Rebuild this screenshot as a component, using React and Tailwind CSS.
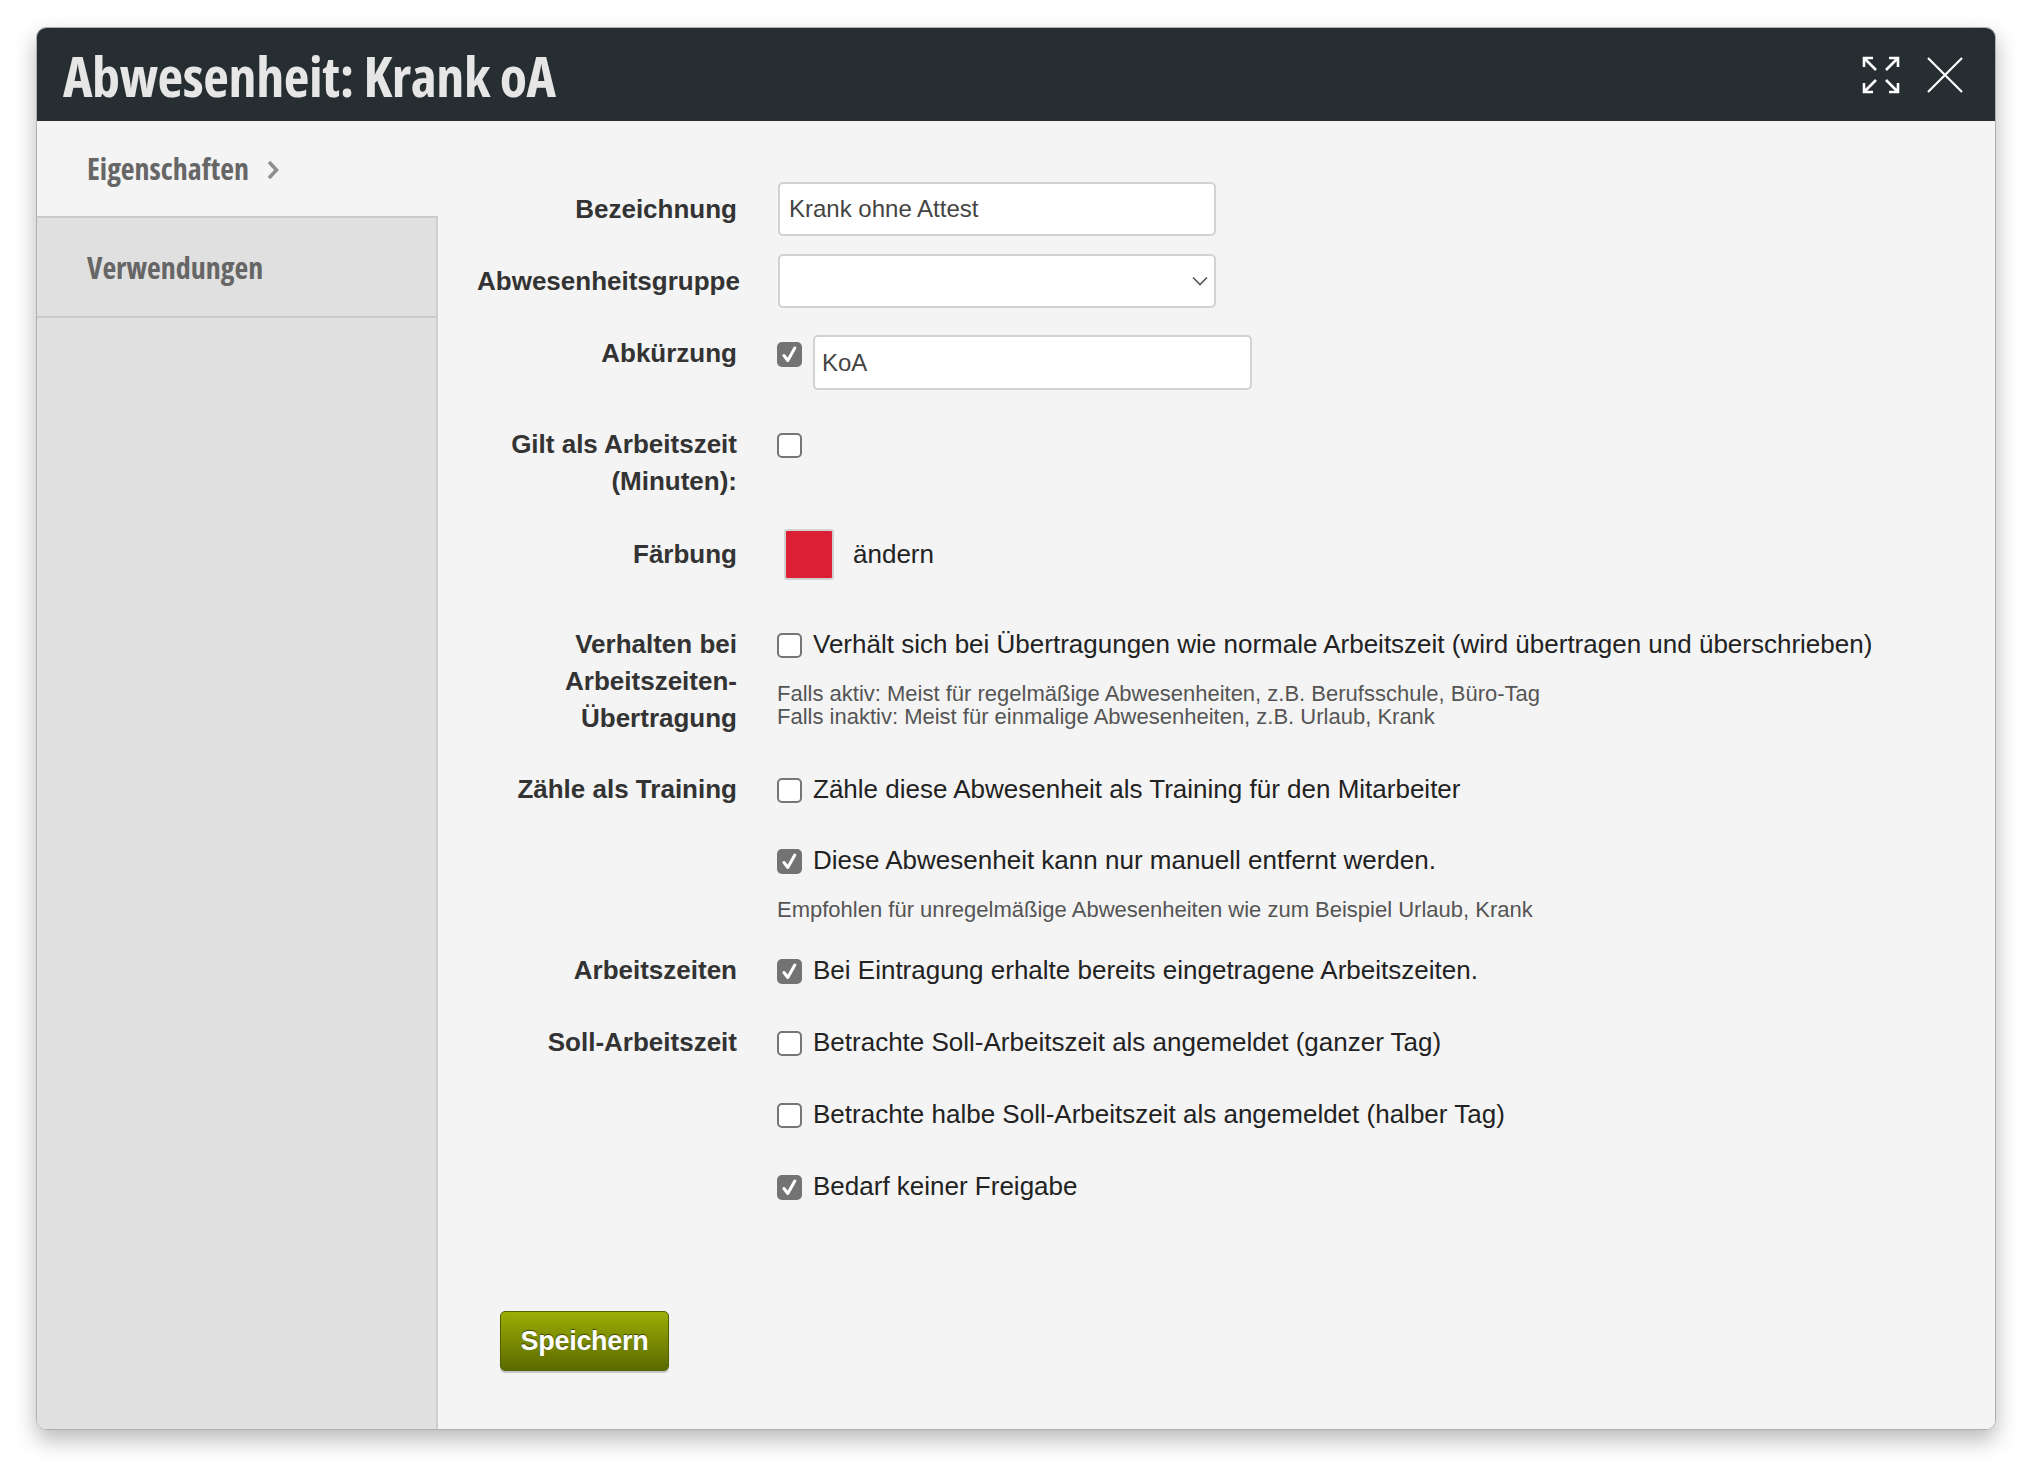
import React from "react";

const Checkbox = ({ checked }) =>
  checked ? (
    <span className="mt-[7px] flex h-[25px] w-[25px] shrink-0 items-center justify-center rounded-[5px] bg-[#737373]">
      <svg width="15" height="17" viewBox="0 0 15 17" fill="none">
        <path d="M2 9.5 L5.8 14.5 L12.8 2" stroke="white" strokeWidth="3" strokeLinecap="round" strokeLinejoin="round" />
      </svg>
    </span>
  ) : (
    <span className="mt-[7px] block h-[25px] w-[25px] shrink-0 rounded-[5px] border-2 border-[#767676] bg-white"></span>
  );

const Label = ({ children }) => (
  <div className="w-[260px] shrink-0 text-right text-[26px] leading-[37px] font-bold text-[#333]">{children}</div>
);

const CheckLine = ({ checked, children }) => (
  <div className="flex items-start">
    <Checkbox checked={checked} />
    <span className="ml-[11px] text-[26px] leading-[37px] text-[#222]">{children}</span>
  </div>
);

const Help = ({ children, className }) => (
  <div className={`text-[22px] leading-[23px] text-[#555] ${className}`}>{children}</div>
);

const App = () => {
  return (
    <div className="min-h-screen bg-white pt-[27px] pl-[36px] font-['Liberation_Sans',Arial,sans-serif]">
      <div className="flex h-[1403px] w-[1960px] flex-col overflow-hidden rounded-[10px] border border-[#b0b0b0] shadow-[0_10px_22px_rgba(0,0,0,0.28)]">
        {/* Header */}
        <div className="flex h-[93px] shrink-0 items-center justify-between bg-[#272e31] pl-[26px] pr-[32px]">
          <h1 className="font-['Open_Sans',sans-serif] text-[56px] leading-none font-bold tracking-[-0.4px] text-[#e6e6e6] font-stretch-[75%]">
            Abwesenheit: Krank oA
          </h1>
          <div className="flex items-center gap-[27px]">
            <svg width="38" height="38" viewBox="0 0 38 38" fill="none" stroke="white" strokeWidth="2.6">
              <path d="M2 2 L14 14 M2 11 V2 H11" />
              <path d="M36 2 L24 14 M27 2 H36 V11" />
              <path d="M2 36 L14 24 M2 27 V36 H11" />
              <path d="M36 36 L24 24 M27 36 H36 V27" />
            </svg>
            <svg width="36" height="36" viewBox="0 0 36 36" fill="none" stroke="white" strokeWidth="2.2">
              <path d="M1 1 L35 35 M35 1 L1 35" />
            </svg>
          </div>
        </div>

        <div className="flex flex-1">
          {/* Sidebar */}
          <div className="flex w-[401px] shrink-0 flex-col">
            <div className="flex h-[97px] items-center border-b-2 border-[#cacaca] bg-[#f4f4f4] pl-[50px]">
              <span className="font-['Open_Sans',sans-serif] text-[30px] font-bold text-[#666] font-stretch-[75%]">Eigenschaften</span>
              <svg className="ml-[18px] mt-[2px]" width="12" height="20" viewBox="0 0 12 20" fill="none" stroke="#8f8f8f" strokeWidth="3.6">
                <path d="M2 2 L9.5 10 L2 18" />
              </svg>
            </div>
            <div className="flex flex-1 flex-col border-r-2 border-[#cfcfcf] bg-[#e0e0e0]">
              <div className="flex h-[100px] items-center border-b-2 border-[#cacaca] pl-[50px]">
                <span className="font-['Open_Sans',sans-serif] text-[30px] font-bold text-[#666] font-stretch-[75%]">Verwendungen</span>
              </div>
            </div>
          </div>

          {/* Content */}
          <div className="flex-1 bg-[#f4f4f4] pl-[39px]">
            <div className="mt-[61px] flex h-[54px] items-center">
              <Label>Bezeichnung</Label>
              <div className="ml-[41px] flex h-[54px] w-[438px] items-center rounded-[5px] border-2 border-[#d2d2d2] bg-white pl-[9px] text-[24px] text-[#444]">
                Krank ohne Attest
              </div>
            </div>

            <div className="mt-[18px] flex h-[54px] items-center">
              <Label>Abwesenheitsgruppe</Label>
              <div className="ml-[41px] flex h-[54px] w-[438px] items-center justify-end rounded-[5px] border-2 border-[#d2d2d2] bg-white pr-[6px]">
                <svg width="16" height="10" viewBox="0 0 16 10" fill="none" stroke="#555" strokeWidth="1.6">
                  <path d="M1 1.5 L8 8.5 L15 1.5" />
                </svg>
              </div>
            </div>

            <div className="mt-[27px] flex items-start">
              <Label>Abkürzung</Label>
              <div className="ml-[40px] flex items-start">
                <Checkbox checked />
                <div className="ml-[11px] flex h-[55px] w-[439px] items-center rounded-[5px] border-2 border-[#d2d2d2] bg-white pl-[7px] text-[24px] text-[#444]">
                  KoA
                </div>
              </div>
            </div>

            <div className="mt-[36px] flex items-start">
              <Label>
                Gilt als Arbeitszeit
                <br />
                (Minuten):
              </Label>
              <div className="ml-[40px]">
                <Checkbox />
              </div>
            </div>

            <div className="mt-[29px] flex items-center">
              <Label>Färbung</Label>
              <div className="ml-[40px] flex items-center">
                <span className="ml-[7px] block h-[51px] w-[50px] rounded-[3px] border-2 border-[#d0d0d0] bg-[#dc1f35]"></span>
                <span className="ml-[19px] text-[26px] leading-[37px] text-[#222]">ändern</span>
              </div>
            </div>

            <div className="mt-[46px] flex items-start">
              <Label>
                Verhalten bei
                <br />
                Arbeitszeiten-
                <br />
                Übertragung
              </Label>
              <div className="ml-[40px]">
                <CheckLine>Verhält sich bei Übertragungen wie normale Arbeitszeit (wird übertragen und überschrieben)</CheckLine>
                <Help className="mt-[19px]">
                  Falls aktiv: Meist für regelmäßige Abwesenheiten, z.B. Berufsschule, Büro-Tag
                  <br />
                  Falls inaktiv: Meist für einmalige Abwesenheiten, z.B. Urlaub, Krank
                </Help>
              </div>
            </div>

            <div className="mt-[34px] flex items-start">
              <Label>Zähle als Training</Label>
              <div className="ml-[40px]">
                <CheckLine>Zähle diese Abwesenheit als Training für den Mitarbeiter</CheckLine>
              </div>
            </div>

            <div className="mt-[34px] flex items-start">
              <Label></Label>
              <div className="ml-[40px]">
                <CheckLine checked>Diese Abwesenheit kann nur manuell entfernt werden.</CheckLine>
                <Help className="mt-[19px]">Empfohlen für unregelmäßige Abwesenheiten wie zum Beispiel Urlaub, Krank</Help>
              </div>
            </div>

            <div className="mt-[31px] flex items-start">
              <Label>Arbeitszeiten</Label>
              <div className="ml-[40px]">
                <CheckLine checked>Bei Eintragung erhalte bereits eingetragene Arbeitszeiten.</CheckLine>
              </div>
            </div>

            <div className="mt-[35px] flex items-start">
              <Label>Soll-Arbeitszeit</Label>
              <div className="ml-[40px]">
                <CheckLine>Betrachte Soll-Arbeitszeit als angemeldet (ganzer Tag)</CheckLine>
              </div>
            </div>

            <div className="mt-[35px] flex items-start">
              <Label></Label>
              <div className="ml-[40px]">
                <CheckLine>Betrachte halbe Soll-Arbeitszeit als angemeldet (halber Tag)</CheckLine>
              </div>
            </div>

            <div className="mt-[35px] flex items-start">
              <Label></Label>
              <div className="ml-[40px]">
                <CheckLine checked>Bedarf keiner Freigabe</CheckLine>
              </div>
            </div>

            <button className="mt-[106px] ml-[23px] flex h-[60px] w-[169px] items-center justify-center rounded-[5px] border border-[#536100] bg-linear-to-b from-[#9cae06] to-[#5b6a00] text-[27px] font-bold tracking-[-0.3px] text-white shadow-[0_2px_1px_rgba(0,0,0,0.2)] [text-shadow:0_-1px_1px_rgba(0,0,0,0.55)]">
              Speichern
            </button>
          </div>
        </div>
      </div>
    </div>
  );
};

export default App;
